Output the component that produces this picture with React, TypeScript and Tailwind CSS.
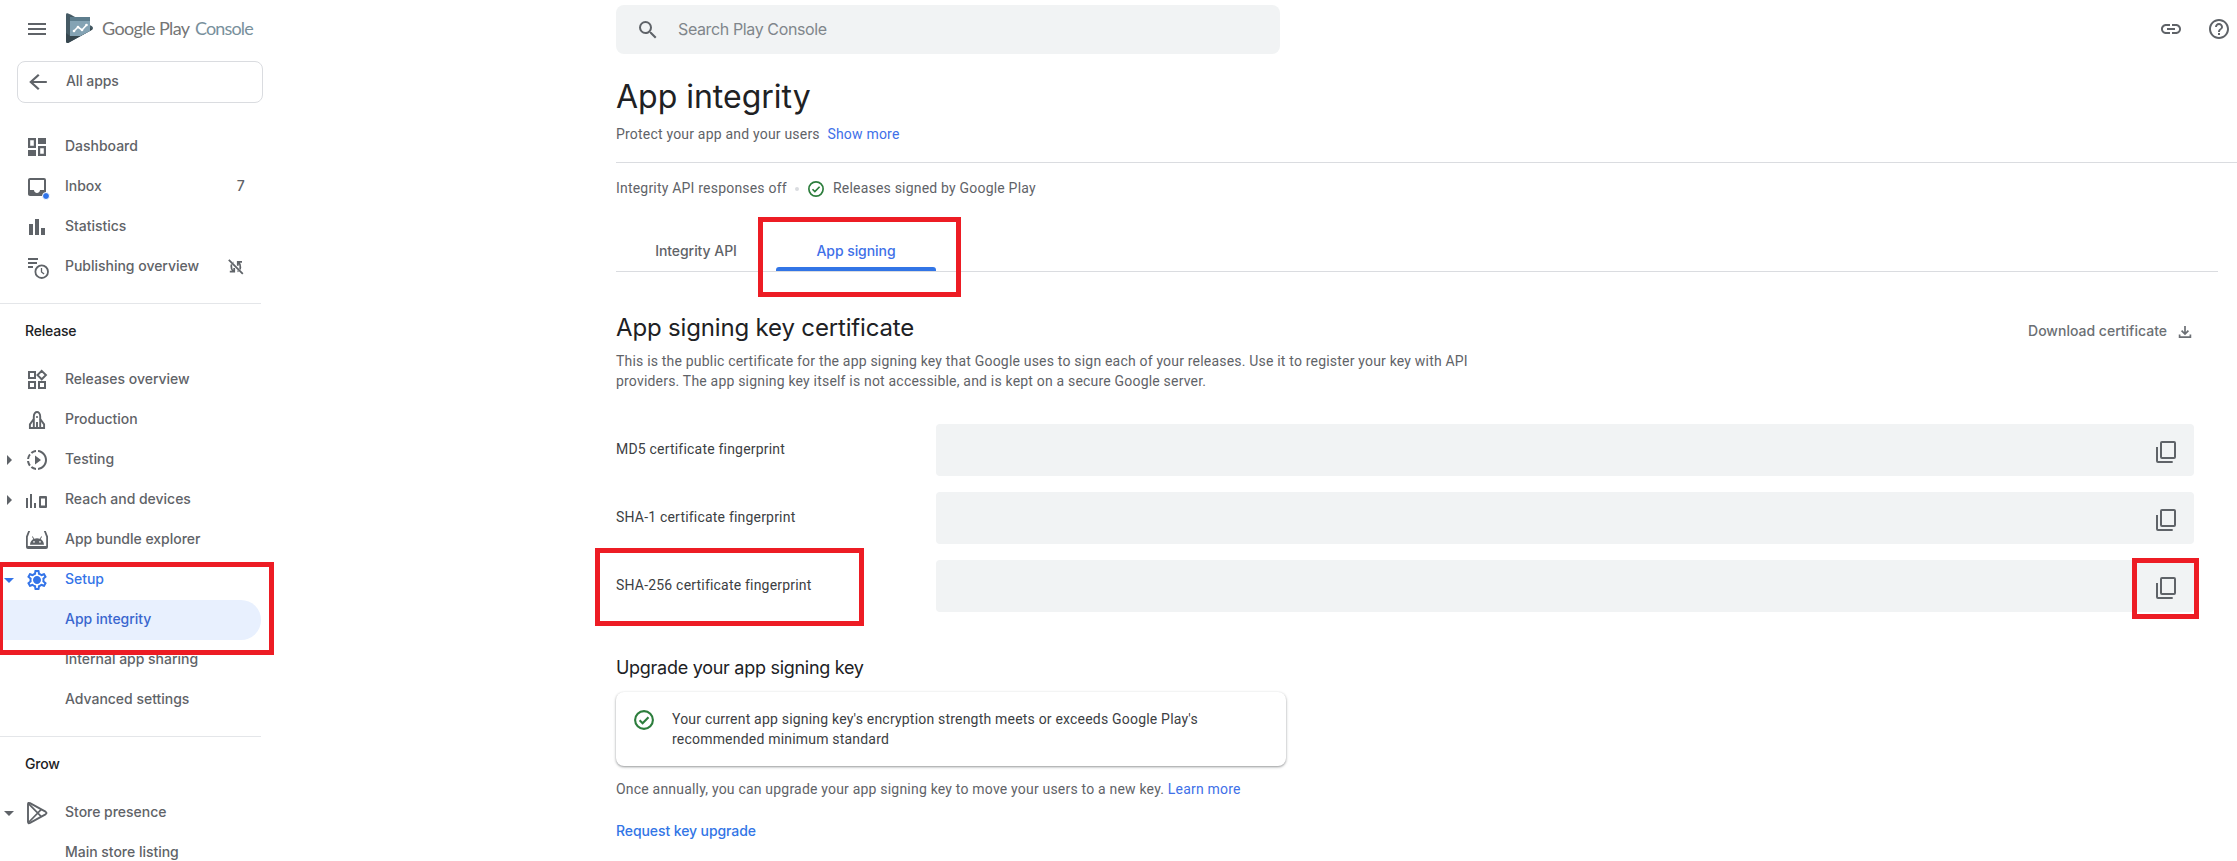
import type { ReactNode } from "react";
import {
  MdArrowBack,
  MdArrowDropDown,
  MdArrowRight,
  MdHelpOutline,
  MdInbox,
  MdLink,
  MdMenu,
  MdOutlineSettings,
  MdSearch,
  MdSlowMotionVideo,
} from "react-icons/md";

const display = "font-['Inter',sans-serif]";

function Glyph({ children }: { children: ReactNode }) {
  return (
    <svg viewBox="0 0 24 24" className="size-6 overflow-visible" fill="currentColor">
      {children}
    </svg>
  );
}

const DashboardIcon = () => (
  <Glyph>
    <path fillRule="evenodd" d="M3 3h8v10H3zM5.2 5.2v5.6h3.6V5.2zM13 3h8v6h-8zM3 15h8v6H3zM13 11h8v10h-8zM15.2 13.2v5.6h3.6v-5.6z" />
  </Glyph>
);

const InboxIcon = () => (
  <span className="relative block size-6">
    <MdInbox className="size-6" />
    <span className="absolute left-[17px] top-[17px] size-2 rounded-full border border-white bg-[#2f74ea]" />
  </span>
);

const StatisticsIcon = () => (
  <Glyph>
    <path d="M4 9h4v11H4zM10 4h4v16h-4zM16 13h4v7h-4z" />
  </Glyph>
);

const PublishingIcon = () => (
  <Glyph>
    <path d="M3 3h10v2H3zM3 7h9v2H3zM3 11h5v2H3z" />
    <circle cx="16.7" cy="16.7" r="6.3" fill="none" stroke="currentColor" strokeWidth="1.8" />
    <path d="M16.5 13v4l2.6 2" fill="none" stroke="currentColor" strokeWidth="1.3" />
  </Glyph>
);

const SyncOffIcon = () => (
  <svg viewBox="0 0 16 16" className="mr-[17px] size-4" fill="none" stroke="currentColor" strokeWidth="1.8">
    <path d="M5.5 3.2C2.6 4.5 2.6 9.5 5 12M1.8 12.7h4.4V9M9.5 12.5C13 11 13.2 6 10.8 3.6M14 2.9H9.8v3.800" />
    <path d="m.8.8 14 14" stroke="#fff" strokeWidth="2.6" />
    <path d="m.8.8 14 14" />
  </svg>
);

const ReleasesIcon = () => (
  <Glyph>
    <g fill="none" stroke="currentColor" strokeWidth="2">
      <path d="M4 4h6v6H4zM4 14h6v6H4zM14 14h6v6h-6zM16.7 2.9 20.9 7.1 16.7 11.3 12.5 7.1z" />
    </g>
  </Glyph>
);

const ProductionIcon = () => (
  <Glyph>
    <g fill="none" stroke="currentColor" strokeWidth="1.9">
      <path d="M8.8 20V8.5C8.8 5.4 10.6 4 12 4s3.2 1.4 3.2 4.5V20" />
      <path d="M8.8 11 4.9 16.4V20h14.2v-3.6L15.2 11M12 14v6" />
    </g>
    <circle cx="12" cy="9" r="1.1" />
  </Glyph>
);

const ReachIcon = () => (
  <Glyph>
    <path fillRule="evenodd" d="M1 10h2v10H1zM5 6h2v14H5zM9 15h2v5H9zM14 9q0-1 1-1h6q1 0 1 1v10q0 1-1 1h-6q-1 0-1-1zM16 10.5v7h4v-7z" />
  </Glyph>
);

const BundleIcon = () => (
  <Glyph>
    <path fillRule="evenodd" d="M3.2 3 1 8.6V19q0 2 2 2h18q2 0 2-2V8.6L20.8 3h-1.9l2.3 6v9H2.8V9L5.1 3z" />
    <path fillRule="evenodd" d="M5 16.8c.2-2.8 1.6-4.7 3.3-5.7L7 8.7l.8-.4 1.3 2.4c1.9-.7 3.9-.7 5.8 0l1.3-2.4.8.4-1.3 2.4c1.7 1 3.1 2.9 3.3 5.7zM9 13.1a.8.8 0 1 0 0 1.6.8.8 0 0 0 0-1.6zm6 0a.8.8 0 1 0 0 1.6.8.8 0 0 0 0-1.6z" />
  </Glyph>
);

const SetupIcon = () => (
  <span className="relative flex size-6 items-center justify-center">
    <MdOutlineSettings className="size-6" />
    <span className="absolute size-[6px] rounded-full bg-current" />
  </span>
);

const StoreIcon = () => (
  <Glyph>
    <g fill="none" stroke="currentColor" strokeWidth="1.9" strokeLinejoin="round">
      <path d="M3 3.2Q3 1.2 5 2.2L20.5 10.7Q22.5 12 20.5 13.3L5 21.9Q3 22.8 3 20.8z" />
      <path d="M3.5 2.6 16.3 15.7M3.5 21.5 16.3 8.4" strokeWidth="1.7" />
    </g>
  </Glyph>
);

const CopyIcon = () => (
  <svg viewBox="0 0 24 24" className="size-6" fill="none" stroke="#5f6368" strokeWidth="2">
    <rect x="7" y="2" width="14" height="16" rx="1" />
    <path d="M3 7v14q0 1 1 1h14.7" />
  </svg>
);

const DownloadIcon = () => (
  <svg viewBox="0 0 14 14" className="size-[14px]" fill="none" stroke="#6b6f74" strokeWidth="1.7">
    <path d="M7 1v7.6M3.6 5.6 7 9l3.4-3.4M1.6 9.600v2.600h10.800V9.600" />
  </svg>
);

const CheckCircle = ({ className }: { className: string }) => (
  <svg viewBox="0 0 20 20" className={className} fill="none" stroke="#2c7d3c">
    <circle cx="10" cy="10" r="8.9" strokeWidth="2.1" />
    <path d="m5.6 10.3 3 3 5.9-6.1" strokeWidth="2.1" />
  </svg>
);

const Logo = () => (
  <svg viewBox="0 0 28 30" className="h-[30px] w-7">
    <path d="M0 1.5Q0 0 1.5.3L4.5 1.5 26 13.2Q28 15 26 16.8L3 29.5Q0 31 0 28z" fill="#455a64" />
    <path d="M0 20 4 23 24 15 26.5 16.5 3 29.5Q0 31 0 28z" fill="#37474f" />
    <path d="M4 4h20v14L14.5 23H4z" fill="#84a3b4" />
    <path d="M4 4h20v4H4z" fill="#5d7d8d" />
    <path d="m8 18 4-4 4 3 4.5-5" fill="none" stroke="#fff" strokeWidth="1.6" />
    <g fill="#fff">
      <circle cx="8" cy="18" r="1.3" />
      <circle cx="12" cy="14" r="1.3" />
      <circle cx="16" cy="17" r="1.3" />
      <circle cx="20.5" cy="12" r="1.3" />
    </g>
  </svg>
);

type Item = {
  label: string;
  icon?: ReactNode;
  arrow?: "right" | "down";
  trailing?: ReactNode;
  tone?: "active" | "selected";
};

function NavItem({ label, icon, arrow, trailing, tone }: Item) {
  const colour =
    tone === "active" ? "text-[#3474e8]" : tone === "selected" ? "bg-[#e8f0fe] text-[#3966cf]" : "text-[#5f6368]";
  return (
    <li className={`flex h-10 w-[261px] items-center rounded-r-full ${colour}`}>
      <span className="-ml-[3px] flex w-7 shrink-0">
        {arrow === "right" && <MdArrowRight className="size-6" />}
        {arrow === "down" && <MdArrowDropDown className="size-6" />}
      </span>
      <span className="w-10 shrink-0">{icon}</span>
      <span className="grow whitespace-nowrap pb-[2px] text-sm font-medium tracking-[-0.02px]">{label}</span>
      {trailing}
    </li>
  );
}

function NavGroup({ title, items }: { title?: string; items: Item[] }) {
  return (
    <section className="pb-4">
      {title && (
        <h2 className="mb-[2px] flex h-[54px] items-center pl-[25px] text-sm font-medium tracking-[-0.2px] text-[#202124]">
          {title}
        </h2>
      )}
      <ul>
        {items.map((item) => (
          <NavItem key={item.label} {...item} />
        ))}
      </ul>
    </section>
  );
}

const overview: Item[] = [
  { label: "Dashboard", icon: <DashboardIcon /> },
  { label: "Inbox", icon: <InboxIcon />, trailing: <span className="pb-[2px] pr-4 text-sm font-medium">7</span> },
  { label: "Statistics", icon: <StatisticsIcon /> },
  { label: "Publishing overview", icon: <PublishingIcon />, trailing: <SyncOffIcon /> },
];

const release: Item[] = [
  { label: "Releases overview", icon: <ReleasesIcon /> },
  { label: "Production", icon: <ProductionIcon /> },
  { label: "Testing", icon: <MdSlowMotionVideo className="size-6" />, arrow: "right" },
  { label: "Reach and devices", icon: <ReachIcon />, arrow: "right" },
  { label: "App bundle explorer", icon: <BundleIcon /> },
  { label: "Setup", icon: <SetupIcon />, arrow: "down", tone: "active" },
  { label: "App integrity", tone: "selected" },
  { label: "Internal app sharing" },
  { label: "Advanced settings" },
];

const grow: Item[] = [
  { label: "Store presence", icon: <StoreIcon />, arrow: "down" },
  { label: "Main store listing" },
];

const fingerprints = ["MD5 certificate fingerprint", "SHA-1 certificate fingerprint", "SHA-256 certificate fingerprint"];

function Sidebar() {
  return (
    <aside className={`w-[616px] shrink-0 ${display}`}>
      <div className="flex h-[61px] items-start pl-[25px] pt-[13px]">
        <MdMenu className="mt-1 size-6 text-[#5f6368]" />
        <div className="ml-[17px] flex">
          <Logo />
          <div className="ml-2 mt-[3px] flex gap-[5px] whitespace-nowrap font-['Lato',sans-serif] text-[18px] leading-6">
            <span className="w-[88px] tracking-[-0.6px] text-[#757575]">Google Play</span>
            <span className="tracking-[-0.86px] text-[#78909c]">Console</span>
          </div>
        </div>
      </div>
      <a className="ml-[17px] flex h-[42px] w-[246px] items-center rounded-lg border border-[#dadce0] pl-2 text-[#5f6368]">
        <MdArrowBack className="size-6 scale-x-110" />
        <span className="ml-4 pb-[2px] text-sm font-medium tracking-[-0.1px]">All apps</span>
      </a>
      <nav className="mt-6">
        <NavGroup items={overview} />
        <hr className="w-[261px] border-[#e4e6e9]" />
        <NavGroup title="Release" items={release} />
        <hr className="w-[261px] border-[#e4e6e9]" />
        <NavGroup title="Grow" items={grow} />
      </nav>
    </aside>
  );
}

export default function App() {
  return (
    <div className="relative flex h-[861px] w-[2237px] overflow-hidden bg-white font-['Roboto',sans-serif] text-sm leading-5 tracking-[0.2px] text-[#5f6368]">
      <Sidebar />
      <main className="min-w-0 grow">
        <header className="flex h-[58px] justify-between pt-[5px]">
          <div className="flex h-[49px] w-[664px] items-center rounded-lg bg-[#f1f3f4] pl-5">
            <MdSearch className="size-6" />
            <span className={`ml-[18px] pb-[2px] text-base tracking-[-0.38px] text-[#80868b] ${display}`}>
              Search Play Console
            </span>
          </div>
          <div className="flex h-12 items-center gap-6 pr-[6px]">
            <MdLink className="size-6" />
            <MdHelpOutline className="size-6" />
          </div>
        </header>

        <h1 className={`mt-[19px] text-[32px] leading-10 tracking-[-0.01px] text-[#202124] ${display}`}>App integrity</h1>
        <p className="mt-[7px]">
          Protect your app and your users <a className="ml-1 text-[#4070e8]">Show more</a>
        </p>
        <hr className="mt-[18px] border-[#dadce0]" />
        <div className="mt-[15px] flex h-5 items-center whitespace-nowrap">
          <span className="w-[170px]">Integrity API responses off</span>
          <span className="ml-[9px] mt-[2px] size-1 shrink-0 rounded-full bg-[#dadce0]" />
          <CheckCircle className="ml-[9px] mt-[2px] size-4" />
          <span className="ml-[9px]">Releases signed by Google Play</span>
        </div>

        <div className={`mr-[19px] mt-[34px] flex h-10 border-b border-[#dadce0] font-medium tracking-[-0.06px] ${display}`}>
          <div className="w-40 pt-[9px] text-center">Integrity API</div>
          <div className="flex w-40 flex-col items-center text-[#4070e8]">
            <span className="grow pt-[9px]">App signing</span>
            <span className="h-1 w-full rounded-t-[3px] bg-[#3275e6]" />
          </div>
        </div>

        <section className="mr-[43px]">
          <div className="mt-10 flex items-start justify-between">
            <h2 className={`text-2xl tracking-[-0.16px] text-[#202124] ${display}`}>App signing key certificate</h2>
            <a className={`mt-[9px] flex items-center font-medium tracking-normal text-[#6b6f74] ${display}`}>
              Download certificate
              <span className="ml-[11px] mr-[2px] mt-px">
                <DownloadIcon />
              </span>
            </a>
          </div>
          <p className="mt-[7px] w-[870px] tracking-[0.194px]">
            This is the public certificate for the app signing key that Google uses to sign each of your releases. Use it to
            register your key with API providers. The app signing key itself is not accessible, and is kept on a secure Google
            server.
          </p>
          <div className="mt-[33px] flex flex-col gap-4">
            {fingerprints.map((label) => (
              <div key={label} className="flex">
                <span className="w-80 pt-[15px] text-[#3c4043]">{label}</span>
                <div className="flex h-[52px] grow items-center justify-end rounded bg-[#f1f3f4] pr-4 pt-1">
                  <CopyIcon />
                </div>
              </div>
            ))}
          </div>
        </section>

        <h3 className={`mt-11 text-lg leading-6 tracking-[-0.28px] text-[#202124] ${display}`}>Upgrade your app signing key</h3>
        <div className="mt-3 flex h-[74px] w-[670px] rounded-lg bg-white pl-[18px] pt-[17px] text-[#3c4043] shadow-[0_1px_3px_rgba(60,64,67,0.3),0_1px_2px_rgba(60,64,67,0.3)]">
          <CheckCircle className="mt-px size-5" />
          <p className="ml-[18px] w-[560px]">
            Your current app signing key's encryption strength meets or exceeds Google Play's recommended minimum standard
          </p>
        </div>
        <p className="mt-[13px]">
          Once annually, you can upgrade your app signing key to move your users to a new key.{" "}
          <a className="text-[#4070e8]">Learn more</a>
        </p>
        <a className={`mt-[22px] block font-medium tracking-[-0.09px] text-[#3275e6] ${display}`}>Request key upgrade</a>
      </main>

      <div className="absolute left-[-2px] top-[562px] h-[93px] w-[276px] border-[5px] border-[#ed1c24]" />
      <div className="absolute left-[758px] top-[217px] h-20 w-[203px] border-[5px] border-[#ed1c24]" />
      <div className="absolute left-[595px] top-[548px] h-[78px] w-[269px] border-[5px] border-[#ed1c24]" />
      <div className="absolute left-[2132px] top-[558px] h-[61px] w-[67px] border-[5px] border-[#ed1c24]" />
    </div>
  );
}
